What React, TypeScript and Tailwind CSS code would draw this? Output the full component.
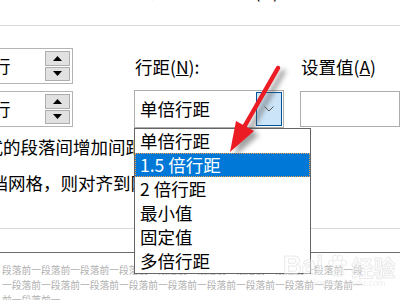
import React from "react";

const F = { fontFamily: '"Noto Sans CJK SC", "Noto Sans", sans-serif' };

function SpinBox() {
  return (
    <div className="relative w-[74px] h-[36px] border border-[#b4b4b4] bg-white ml-[-1px] flex items-center overflow-hidden">
      <span className="ml-[-7px] text-[17.5px] leading-[24px] text-black">行</span>
      <div className="absolute right-[2px] top-[2px] bottom-[2px] w-[25px] flex flex-col gap-[1px]">
        <div className="flex-1 bg-[#e1e1e1] border border-[#adadad] flex items-center justify-center">
          <svg width="9" height="5" viewBox="0 0 9 5"><path d="M0 5 L4.5 0 L9 5 Z" fill="#000" /></svg>
        </div>
        <div className="flex-1 bg-[#e1e1e1] border border-[#adadad] flex items-center justify-center">
          <svg width="9" height="5" viewBox="0 0 9 5"><path d="M0 0 L4.5 5 L9 0 Z" fill="#000" /></svg>
        </div>
      </div>
    </div>
  );
}

const items = ["单倍行距", "1.5 倍行距", "2 倍行距", "最小值", "固定值", "多倍行距"];

export default function App() {
  const row1 = "段落前一".repeat(9) + "段";
  const row2 = "一" + "段落前一".repeat(9);
  const row3 = "前一段落前一";
  return (
    <div className="relative w-[400px] h-[300px] overflow-hidden bg-white text-black" style={F}>
      {/* top cut line */}
      <div className="h-[25px] overflow-hidden">
        <div className="mt-[-21px] ml-[-8px] whitespace-nowrap text-[17.5px] leading-[24px]">
          如果定义了文档网格，则自动调整(<span className="underline">U</span>)
        </div>
      </div>
      <div className="h-px bg-[#dadada]" />

      {/* controls row */}
      <div className="flex items-start">
        <div className="flex flex-col gap-[7px] pt-[22px]">
          <SpinBox />
          <SpinBox />
        </div>
        <div className="ml-[61px] w-[177px] flex flex-col">
          <div className="pt-[30px] pl-[1px] text-[17.5px] leading-[22px] whitespace-nowrap">
            行距(<span className="underline">N</span>):
          </div>
          <div className="mt-[12px] h-[38px] border border-[#adadad] bg-white flex items-center justify-between pl-[5px] pr-[1px]">
            <span className="text-[17.5px] leading-[24px]">单倍行距</span>
            <div className="w-[26px] h-[34px] bg-[#cce4f7] border border-[#005499] flex items-center justify-center">
              <svg width="10" height="6" viewBox="0 0 10 6"><path d="M0.5 0.5 L5 5 L9.5 0.5" fill="none" stroke="#555" strokeWidth="1" /></svg>
            </div>
          </div>
        </div>
        <div className="ml-[16px] flex flex-col">
          <div className="pt-[30px] pl-[1px] text-[17.5px] leading-[22px] whitespace-nowrap">
            设置值(<span className="underline">A</span>)
          </div>
          <div className="mt-[13px] h-[36px] w-[100px] border border-[#adadad] bg-white" />
        </div>
      </div>

      {/* option text lines */}
      <div className="mt-[1px] text-[17.5px] leading-[36px] whitespace-nowrap">
        <div className="ml-[-14.5px]">式的段落间增加间距(<span className="underline">C</span>)</div>
        <div className="ml-[-9.5px]">档网格，则对齐到网格(<span className="underline">W</span>)</div>
      </div>
      <div className="mt-[27px] h-px bg-[#d9d9d9]" />

      {/* preview */}
      <div className="mt-[23px] border-t border-[#6d6d6d] pt-[10px] pl-[2px] text-[9.75px] leading-[15px] text-[#b0b0b0] whitespace-nowrap">
        <div>{row1}</div>
        <div>{row2}</div>
        <div>{row3}</div>
      </div>

      {/* dropdown list */}
      <div className="absolute left-[134px] top-[128px] w-[177px] h-[146px] border border-[#646464] bg-white flex flex-col text-[17.5px] leading-[24px]">
        {items.map((t, i) =>
          i === 1 ? (
            <div key={t} className="h-[24px] bg-[#0078d7] text-white pl-[4px] border border-dotted border-[#f0a050] leading-[22px]">
              {t}
            </div>
          ) : (
            <div key={t} className="h-[24px] pl-[5px]">{t}</div>
          )
        )}
      </div>

      {/* watermark */}
      <div className="absolute left-[283px] top-[252px] flex flex-col items-center pointer-events-none opacity-70">
        <div className="flex items-end gap-[2px]">
          <span className="text-[26px] leading-[26px] font-bold" style={{ fontFamily: '"Liberation Sans", sans-serif', WebkitTextStroke: "1px #e2e2e2", color: "rgba(255,255,255,0.5)" }}>Bai</span>
          <svg width="24" height="24" viewBox="0 0 24 24">
            <g fill="rgba(255,255,255,0.4)" stroke="#e2e2e2" strokeWidth="1">
              <ellipse cx="6" cy="9" rx="2.5" ry="3" />
              <ellipse cx="10" cy="4" rx="2.5" ry="3" />
              <ellipse cx="15" cy="4" rx="2.5" ry="3" />
              <ellipse cx="19" cy="9" rx="2.5" ry="3" />
              <path d="M6 20 C6 14 10 12 12.5 12 C15 12 19 14 19 20 C19 23 6 23 6 20 Z" />
            </g>
          </svg>
          <span className="text-[22px] leading-[24px] font-bold" style={{ WebkitTextStroke: "1px #e2e2e2", color: "rgba(255,255,255,0.5)" }}>经验</span>
        </div>
        <span className="text-[9px] leading-[10px] ml-[20px] text-[#e6e6e6]" style={{ fontFamily: '"Liberation Sans", sans-serif' }}>jingyan.baidu.com</span>
      </div>

      {/* red arrow */}
      <svg className="absolute left-0 top-0 pointer-events-none" width="400" height="300" viewBox="0 0 400 300">
        <defs>
          <filter id="sh" x="-50%" y="-50%" width="200%" height="200%">
            <feGaussianBlur stdDeviation="2.5" />
          </filter>
        </defs>
        <g transform="translate(5,4)" opacity="0.55" filter="url(#sh)">
          <line x1="278" y1="68" x2="243" y2="129" stroke="#555" strokeWidth="5" strokeLinecap="round" />
          <polygon points="230,152 254,131 236,121" fill="#555" />
        </g>
        <line x1="278" y1="68" x2="243" y2="129" stroke="#ec1c24" strokeWidth="4.5" strokeLinecap="round" />
        <polygon points="230,152 254,131 236,121" fill="#ec1c24" />
      </svg>
    </div>
  );
}
